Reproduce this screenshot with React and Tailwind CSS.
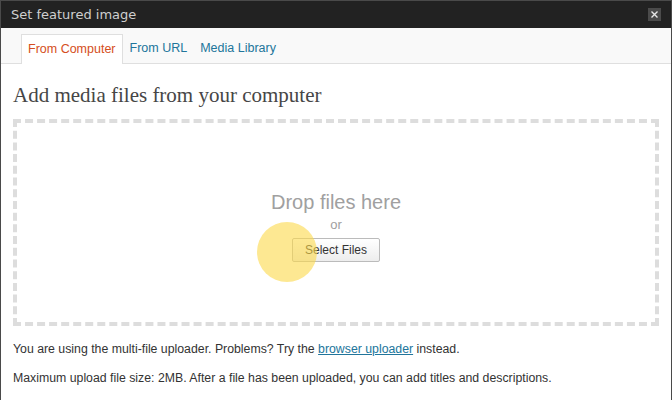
export default function App() {
  return (
    <div className="w-[672px] h-[400px] overflow-hidden bg-white border-x border-t border-[#4a4a4a] flex flex-col relative" style={{ fontFamily: '"Liberation Sans", Arial, sans-serif' }}>

      {/* TITLE BAR */}

      <div className="h-[27px] bg-[#222222] flex items-center justify-between pl-[10px] pr-[10px] shrink-0">
        <span className="text-[13px] text-[#cfcfcf]" style={{ fontFamily: '"DejaVu Sans", Verdana, sans-serif' }}>
          Set featured image
        </span>
        <div className="w-[13px] h-[13px] bg-[#4b4b4b] flex items-center justify-center">
          <svg width="9" height="9" viewBox="0 0 9 9">
            <path d="M1.5 1.5 L7.5 7.5 M7.5 1.5 L1.5 7.5" stroke="#e8e8e8" strokeWidth="1.4" />
          </svg>
        </div>
      </div>

      {/* TABS */}

      <div className="h-[36px] bg-[#f9f9f9] border-b border-[#dfdfdf] flex items-end pl-[20px] shrink-0">
        <div className="h-[30px] px-[6px] flex items-center bg-white border border-b-0 border-[#dfdfdf] text-[12.5px] text-[#d54e21] -mb-px">
          From Computer
        </div>
        <div className="h-[30px] pl-[7px] pr-[13px] flex items-center text-[12.5px] text-[#21759b]">
          From URL
        </div>
        <div className="h-[30px] flex items-center text-[12.5px] text-[#21759b]">
          Media Library
        </div>
      </div>

      {/* CONTENT */}

      <div className="px-[12px] flex flex-col">

        <h3 className="mt-[18px] text-[21px] leading-[26px] text-[#464646]" style={{ fontFamily: '"Liberation Serif", Georgia, serif' }}>
          Add media files from your computer
        </h3>

        <div className="mt-[11px] h-[207px] border-4 border-dashed border-[#dddddd] flex flex-col items-center pt-[68px] relative">
          <p className="text-[20px] leading-[22px] text-[#a0a0a0]">Drop files here</p>
          <p className="text-[13px] leading-[16px] text-[#a0a0a0] mt-[4px]">or</p>
          <button className="mt-[5px] w-[88px] h-[24px] border border-[#bbbbbb] bg-gradient-to-b from-white to-[#ededed] text-[12px] text-[#333] rounded-[2px]">
            Select Files
          </button>
          <div className="absolute left-[240px] top-[99px] w-[60px] h-[60px] rounded-full bg-[#fcd94a]/60" />
        </div>

        <p className="mt-[15px] text-[12.3px] leading-[16px] text-[#333]">
          You are using the multi-file uploader. Problems? Try the{" "}
          <span className="text-[#21759b] underline">browser uploader</span> instead.
        </p>

        <p className="mt-[13px] text-[12.3px] leading-[16px] text-[#333]">
          Maximum upload file size: 2MB. After a file has been uploaded, you can add titles and descriptions.
        </p>

      </div>
    </div>
  );
}
